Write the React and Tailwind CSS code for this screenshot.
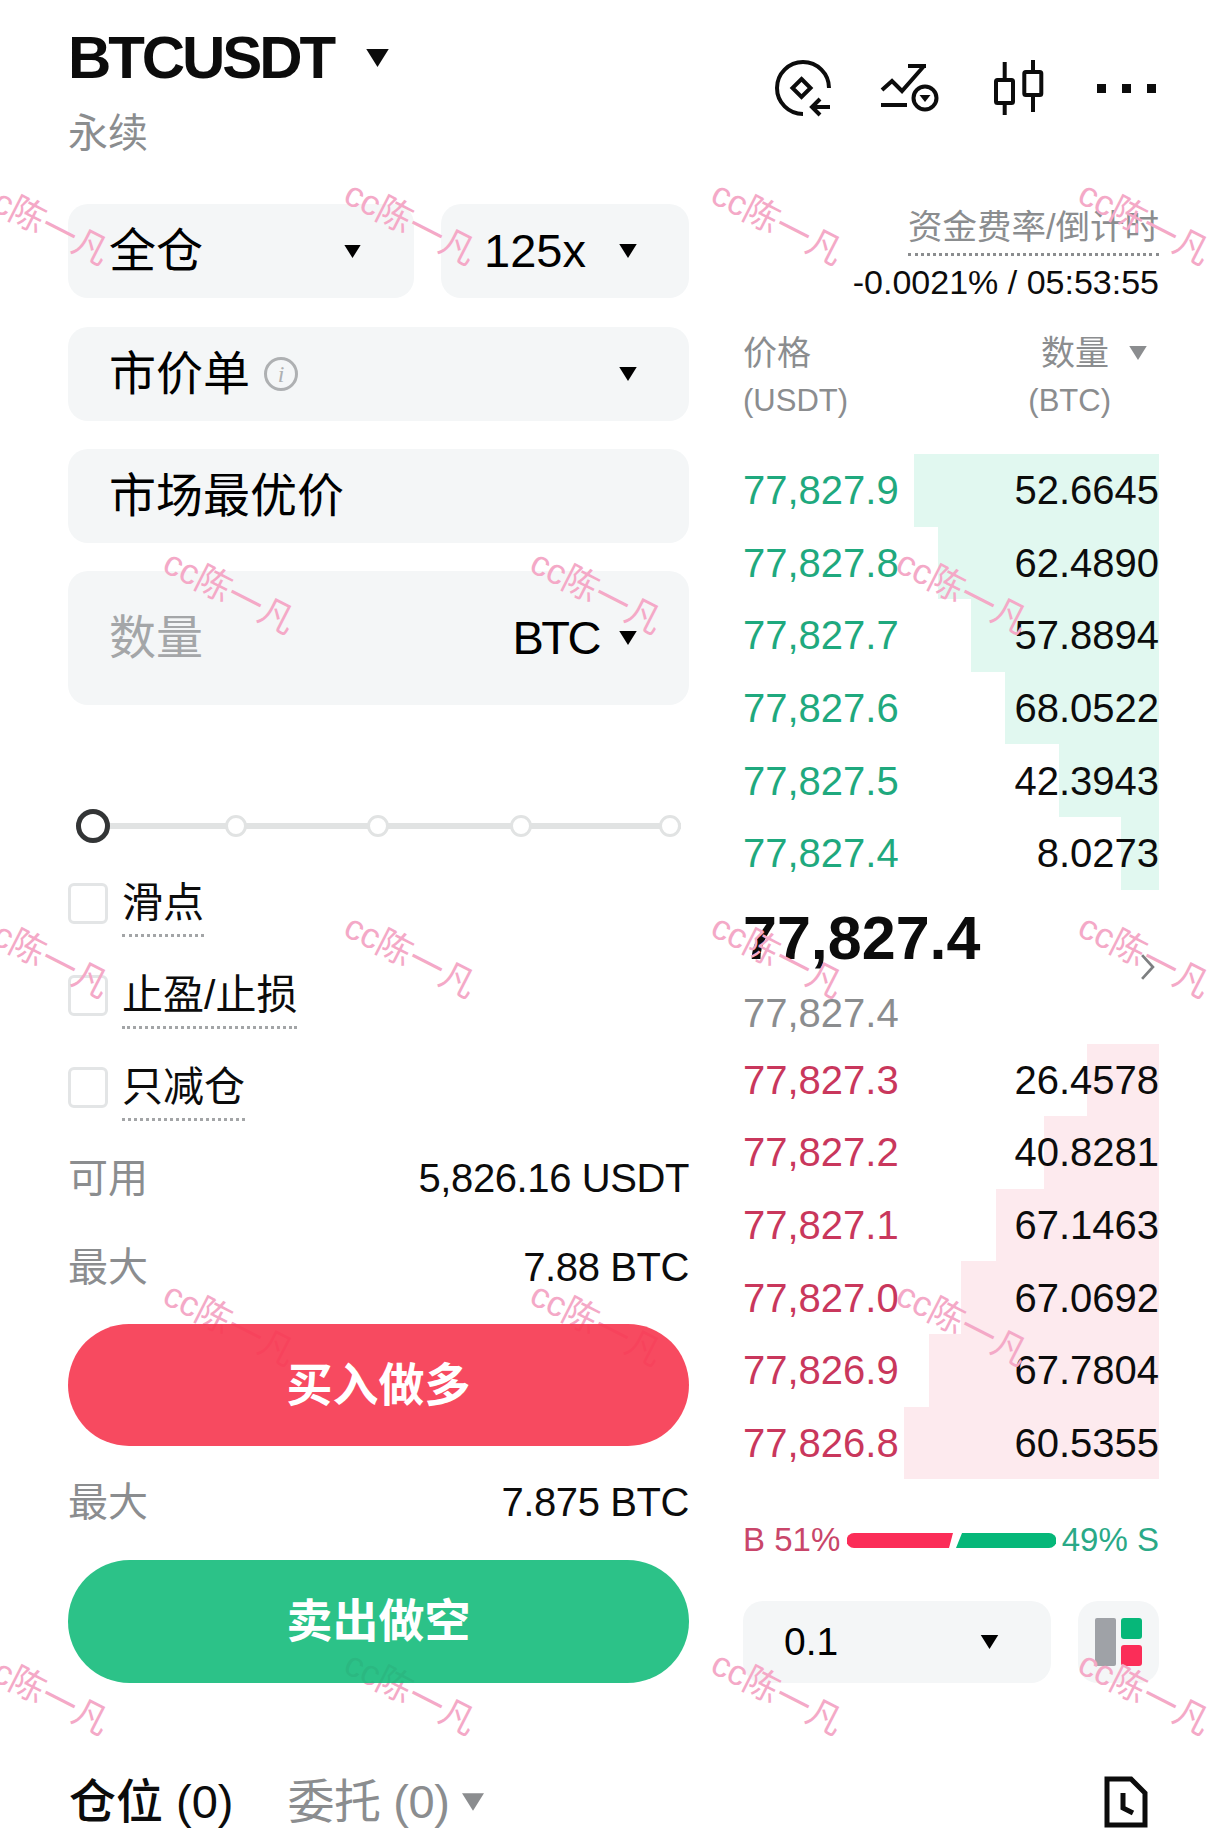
import React from "react";

const FONT = { fontFamily: '"Liberation Sans", "Noto Sans CJK SC", sans-serif' };

const ASKS = [
  ["77,827.9", "52.6645", 245],
  ["77,827.8", "62.4890", 221],
  ["77,827.7", "57.8894", 188],
  ["77,827.6", "68.0522", 154],
  ["77,827.5", "42.3943", 100],
  ["77,827.4", "8.0273", 38],
];

const BIDS = [
  ["77,827.3", "26.4578", 72],
  ["77,827.2", "40.8281", 115],
  ["77,827.1", "67.1463", 163],
  ["77,827.0", "67.0692", 198],
  ["77,826.9", "67.7804", 230],
  ["77,826.8", "60.5355", 255],
];

const MARKS = [
  [-28, 2], [339, 2], [706, 2], [1073, 2],
  [158, 371], [525, 371], [891, 371],
  [-28, 735], [339, 735], [706, 735], [1073, 735],
  [158, 1103], [525, 1103], [891, 1103],
  [-28, 1472], [339, 1472], [706, 1472], [1073, 1472],
];

const Caret = ({ className }) => (
  <svg viewBox="0 0 10 8" className={className} fill="currentColor">
    <path d="M0 0h10L5 8z" />
  </svg>
);

const Select = ({ className, children }) => (
  <div className={`flex items-center justify-between rounded-[20px] bg-[#f4f6f7] ${className}`}>
    {children}
  </div>
);

const Check = ({ label, line }) => (
  <div className={`flex items-start ${line}`}>
    <span className="mt-[11px] w-[40px] h-[41px] rounded-[6px] border-[3px] border-[#e3e5e6] shrink-0" />
    <span className="ml-[14px] text-[41px] leading-[50px] pt-[6px] pb-[6px] text-[#0c0c0c] border-b-[3px] border-dotted border-[#a3a5a7]">
      {label}
    </span>
  </div>
);

const Row = ({ price, qty, width, tone, bar }) => (
  <div className="relative h-[72.6px] flex items-center justify-between text-[40px]">
    <div className={`absolute right-0 top-0 bottom-0 ${bar}`} style={{ width }} />
    <span className={`relative ${tone}`}>{price}</span>
    <span className="relative text-[#0c0c0c]">{qty}</span>
  </div>
);

const Stat = ({ label, value, className }) => (
  <div className={`flex items-center justify-between ${className}`}>
    <span className="text-[40px] text-[#8b8d8f]">{label}</span>
    <span className="text-[40px] tracking-[-0.4px] text-[#0c0c0c]">{value}</span>
  </div>
);

const Dot = ({ className }) => (
  <span className={`relative block w-[22px] h-[22px] rounded-full bg-white border-[3px] border-[#e1e3e3] shrink-0 ${className}`} />
);

const App = () => {
  return (
    <div className="relative w-[1228px] h-[1842px] overflow-hidden bg-white text-black" style={FONT}>
      <div className="flex pl-[68px] pt-[22px]">
        {/* left: order form */}
        <div className="w-[621px] shrink-0">
          <div className="flex items-center h-[72px]">
            <span className="text-[60px] font-bold leading-none text-[#0c0c0c] tracking-[-3.1px]">BTCUSDT</span>
            <Caret className="ml-[33px] w-[23px] h-[18px] text-[#0c0c0c]" />
          </div>
          <div className="mt-[14px] h-[50px] text-[40px] leading-[50px] text-[#8b8d8f]">永续</div>

          <div className="mt-[46px] flex justify-between">
            <Select className="w-[346px] h-[94px] pl-[41px] pr-[53px]">
              <span className="text-[47px]">全仓</span>
              <Caret className="w-[17px] h-[13px]" />
            </Select>
            <Select className="w-[248px] h-[94px] pl-[43px] pr-[52px]">
              <span className="text-[47px]">125x</span>
              <Caret className="w-[18px] h-[14px]" />
            </Select>
          </div>
          <Select className="mt-[29px] h-[94px] pl-[41px] pr-[52px]">
            <span className="flex items-center">
              <span className="text-[47px]">市价单</span>
              <span className="ml-[14px] w-[34px] h-[34px] rounded-full border-[3px] border-[#aeb0b2] flex items-center justify-center text-[24px] italic text-[#aeb0b2]" style={{ fontFamily: '"Liberation Serif", serif' }}>
                i
              </span>
            </span>
            <Caret className="w-[18px] h-[14px]" />
          </Select>
          <Select className="mt-[28px] h-[94px] pl-[41px]">
            <span className="text-[47px]">市场最优价</span>
          </Select>
          <Select className="mt-[28px] h-[134px] pl-[41px] pr-[52px]">
            <span className="text-[47px] text-[#a4a6a8]">数量</span>
            <span className="flex items-center">
              <span className="text-[47px] tracking-[-2.5px]">BTC</span>
              <Caret className="ml-[20px] w-[18px] h-[14px]" />
            </span>
          </Select>

          {/* leverage slider */}
          <div className="relative mt-[104px] h-[34px] mx-[8px] flex items-center">
            <div className="absolute left-0 right-0 top-[14px] h-[6px] bg-[#e1e3e3]" />
            <span className="relative block w-[34px] h-[34px] rounded-full bg-white border-[5px] border-[#333536] shrink-0" />
            <Dot className="ml-[115px]" />
            <Dot className="ml-[120px]" />
            <Dot className="ml-[121px]" />
            <Dot className="ml-[127px]" />
          </div>

          <Check label="滑点" line="mt-[29px]" />
          <Check label="止盈/止损" line="mt-[27px]" />
          <Check label="只减仓" line="mt-[27px]" />

          <Stat label="可用" value="5,826.16 USDT" className="mt-[32px] h-[50px]" />
          <Stat label="最大" value="7.88 BTC" className="mt-[39px] h-[50px]" />
          <button className="relative z-10 mt-[32px] w-full h-[122px] rounded-full bg-[#f63b52]/92 text-white text-[46px] font-bold">
            买入做多
          </button>
          <Stat label="最大" value="7.875 BTC" className="mt-[31px] h-[50px]" />
          <button className="relative z-10 mt-[33px] w-full h-[123px] rounded-full bg-[#0fb977]/88 text-white text-[46px] font-bold">
            卖出做空
          </button>
        </div>

        {/* right: order book */}
        <div className="ml-[54px] w-[416px] shrink-0">
          <div className="flex items-center h-[88px] mt-[22px]">
            <svg viewBox="0 0 58 58" className="ml-[31px] w-[58px] h-[58px]" fill="none" stroke="#0c0c0c" strokeWidth="4">
              <path d="M55 29a26 26 0 1 0-26 26" />
              <path d="M27.5 20l9 9-9 9-9-9z" />
              <path d="M56 48H38M46 40l-8 8 8 8" />
            </svg>
            <svg viewBox="0 0 60 58" className="ml-[48px] w-[60px] h-[58px]" fill="none" stroke="#0c0c0c" strokeWidth="4">
              <path d="M2 31l10-9 10 10L44 7" />
              <path d="M28 7h18" />
              <path d="M1 46h26" />
              <circle cx="45" cy="39" r="11.5" />
              <path d="M39.5 36h11l-5.5 7z" fill="#0c0c0c" stroke="none" />
            </svg>
            <svg viewBox="0 0 54 58" className="ml-[53px] w-[54px] h-[58px]" fill="none" stroke="#0c0c0c" strokeWidth="4">
              <path d="M11.7 3v17M11.7 44v12M40 1v12M40 36v17" />
              <rect x="3" y="21" width="17" height="23" rx="1.5" />
              <rect x="31.3" y="13" width="17" height="23" rx="1.5" />
            </svg>
            <div className="ml-[50px] flex gap-[16px]">
              <span className="w-[9px] h-[9px] bg-[#0c0c0c]" />
              <span className="w-[9px] h-[9px] bg-[#0c0c0c]" />
              <span className="w-[9px] h-[9px] bg-[#0c0c0c]" />
            </div>
          </div>

          <div className="mt-[74px] flex flex-col items-end">
            <span className="text-[34.5px] leading-[42px] text-[#8b8d8f] border-b-[3px] border-dotted border-[#8b8d8f] pb-[5px]">
              资金费率/倒计时
            </span>
            <span className="mt-[5px] text-[34px] leading-[42px] text-[#0c0c0c]">-0.0021% / 05:53:55</span>
          </div>

          <div className="mt-[26px] flex justify-between text-[34px] leading-[48px] text-[#8b8d8f]">
            <div className="flex flex-col">
              <span>价格</span>
              <span className="text-[31px]">(USDT)</span>
            </div>
            <div className="flex flex-col items-end pr-[12px]">
              <span className="flex items-center">
                数量
                <Caret className="ml-[20px] w-[18px] h-[14px]" />
              </span>
              <span className="text-[31px] mr-[36px]">(BTC)</span>
            </div>
          </div>

          <div className="mt-[29px]">
            {ASKS.map(([price, qty, width]) => (
              <Row key={price} price={price} qty={qty} width={width} tone="text-[#1fa97e]" bar="bg-[#e1f8f0]" />
            ))}
          </div>

          <div className="relative h-[154px]">
            <div className="pt-[13px] text-[61px] font-bold leading-[70px] text-[#0c0c0c]">77,827.4</div>
            <div className="mt-[15px] text-[40px] leading-[50px] text-[#8b8d8f]">77,827.4</div>
            <svg viewBox="0 0 12 24" className="absolute right-[4px] top-[64px] w-[15px] h-[26px]" fill="none" stroke="#7d7f81" strokeWidth="2.5">
              <path d="M1 1l10 11L1 23" />
            </svg>
          </div>

          <div>
            {BIDS.map(([price, qty, width]) => (
              <Row key={price} price={price} qty={qty} width={width} tone="text-[#c9375c]" bar="bg-[#fdeaee]" />
            ))}
          </div>

          <div className="mt-[41px] flex items-center justify-between h-[40px] text-[33px]">
            <span className="text-[#c9466a]">B 51%</span>
            <svg viewBox="0 0 209 15" className="w-[209px] h-[15px]">
              <path d="M7 0H106L102 15H7a7.5 7.5 0 0 1 0-15z" fill="#fb2d58" />
              <path d="M115 0H202a7.5 7.5 0 0 1 0 15H109z" fill="#06b779" />
            </svg>
            <span className="text-[#2aa987]">49% S</span>
          </div>

          <div className="mt-[41px] flex justify-between">
            <Select className="w-[308px] h-[82px] pl-[41px] pr-[52px]">
              <span className="text-[39px]">0.1</span>
              <Caret className="w-[19px] h-[14px]" />
            </Select>
            <div className="w-[81px] h-[82px] rounded-[20px] bg-[#f4f6f7] flex items-center justify-center">
              <svg viewBox="0 0 47 48" className="w-[47px] h-[48px]">
                <rect x="0" y="0" width="21" height="48" rx="2" fill="#9fa2a7" />
                <rect x="26" y="0" width="21" height="21" rx="3" fill="#06b779" />
                <rect x="26" y="27" width="21" height="21" rx="3" fill="#fb2d58" />
              </svg>
            </div>
          </div>
        </div>
      </div>

      {/* positions tabs */}
      <div className="mt-[84px] pl-[69px] pr-[70px] flex items-center justify-between">
        <div className="flex items-center">
          <span className="text-[47px] font-medium text-[#0c0c0c]">仓位 (0)</span>
          <span className="ml-[54px] text-[47px] tracking-[-0.4px] text-[#8b8d8f]">委托 (0)</span>
          <Caret className="ml-[12px] w-[22px] h-[18px] text-[#8b8d8f]" />
        </div>
        <svg viewBox="0 0 44 52" className="mr-[10px] w-[44px] h-[52px]" fill="none" stroke="#0c0c0c" strokeWidth="5">
          <path d="M3 3h24l14 14v32H3z" />
          <path d="M19 17v15l10 5" />
        </svg>
      </div>

      {/* watermark */}
      {MARKS.map(([x, y]) => (
        <span
          key={`${x}-${y}`}
          className="absolute top-[204px] whitespace-nowrap text-[35.5px] leading-none text-[#f4a9c7] rotate-[27deg] pointer-events-none"
          style={{ left: x, marginTop: y }}
        >
          cc陈一凡
        </span>
      ))}
    </div>
  );
};

export default App;
